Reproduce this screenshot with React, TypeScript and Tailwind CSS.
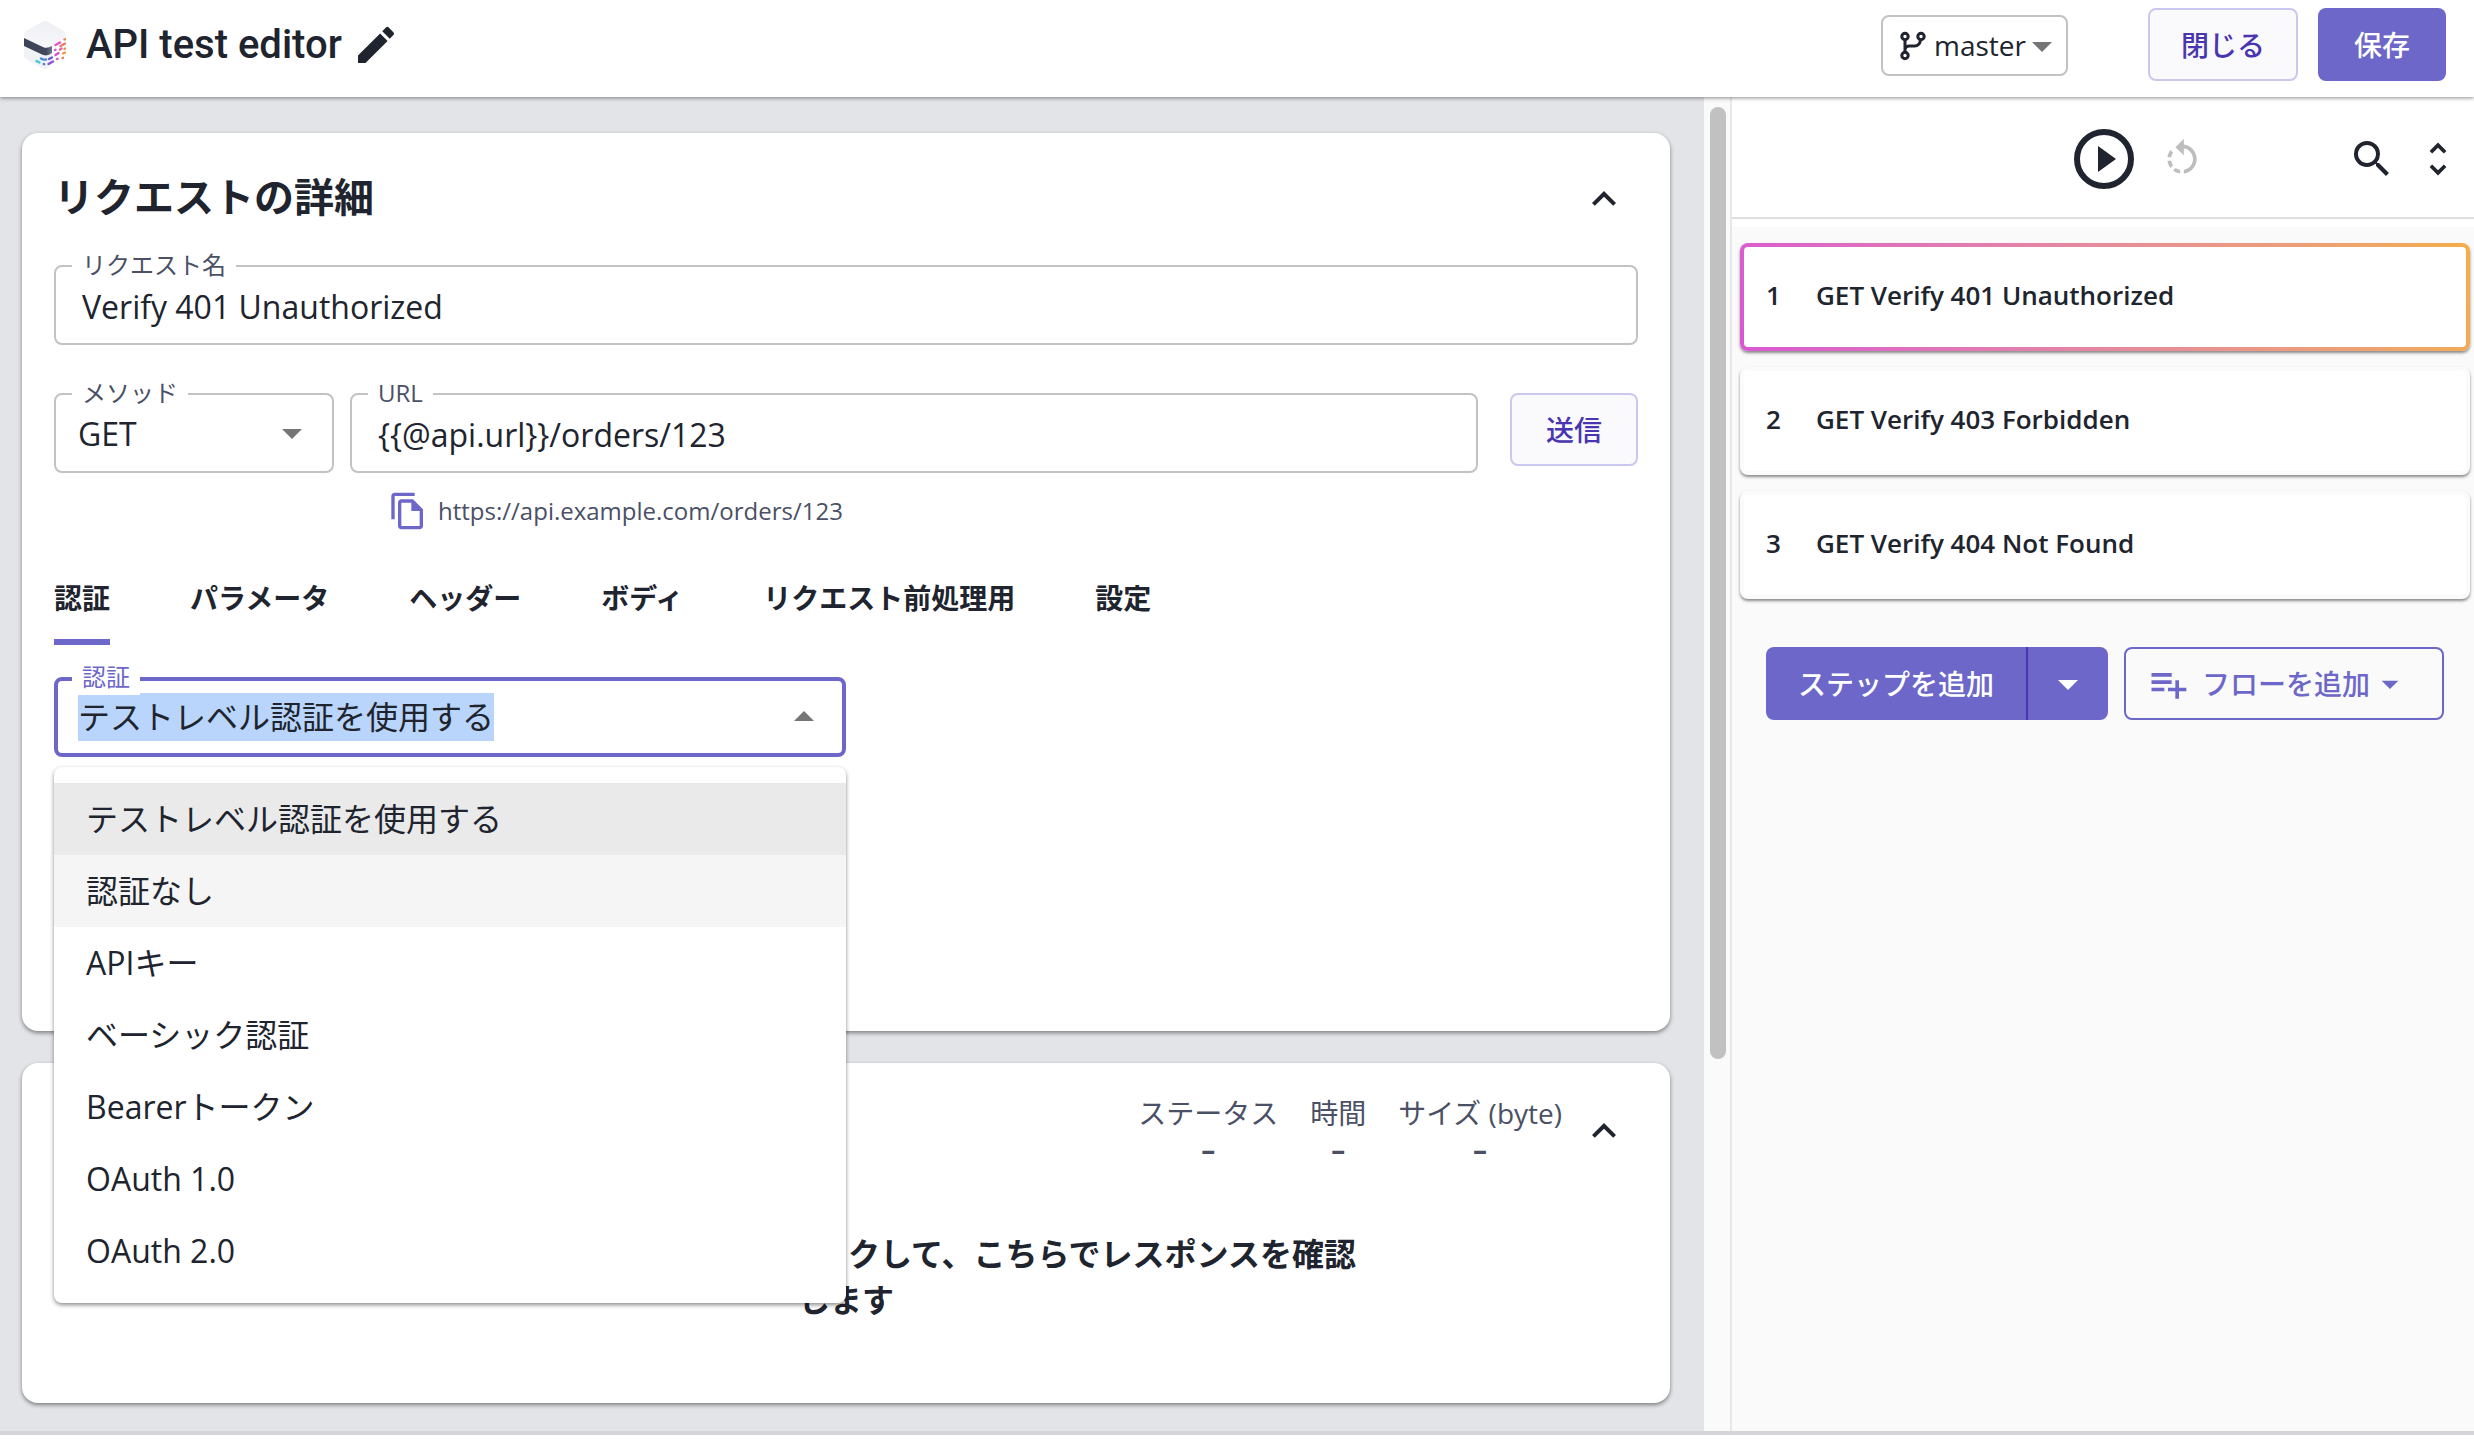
import type { ReactNode } from "react";
import {
  MdArrowDropDown,
  MdArrowDropUp,
  MdEdit,
  MdExpandLess,
  MdOutlineFileCopy,
  MdPlaylistAdd,
  MdRotateLeft,
  MdSearch,
  MdUnfoldMore,
} from "react-icons/md";

const tabs = ["認証", "パラメータ", "ヘッダー", "ボディ", "リクエスト前処理用", "設定"];

const authOptions = [
  "テストレベル認証を使用する",
  "認証なし",
  "APIキー",
  "ベーシック認証",
  "Bearerトークン",
  "OAuth 1.0",
  "OAuth 2.0",
];

const stats = ["ステータス", "時間", "サイズ (byte)"];

const steps = [
  "GET Verify 401 Unauthorized",
  "GET Verify 403 Forbidden",
  "GET Verify 404 Not Found",
];

function Logo() {
  return (
    <svg viewBox="0 0 42 48" className="h-12 w-[42px]" aria-hidden="true">
      <defs>
        <linearGradient id="logo-top" x1="0" y1="0" x2="0" y2="1">
          <stop offset="0" stopColor="#eeeff4" />
          <stop offset="1" stopColor="#f8f8fb" />
        </linearGradient>
        <linearGradient id="logo-band" x1="0" y1="0" x2="1" y2="0">
          <stop offset="0" stopColor="#3c4356" />
          <stop offset="0.8" stopColor="#42495d" />
          <stop offset="1" stopColor="#70788e" />
        </linearGradient>
      </defs>
      <path d="M0 24 L20 35 L28 33 L28 42 L24 47 Q21 49 18 47 L2 38 Q0 37 0 35 Z" fill="#f1f2f6" />
      <path
        d="M18 1 Q21 -1 24 1 L40 10 Q42 11.5 42 14 L42 17 L28 25.5 Q24 28 20 26 L0 17 L0 13 Q0 11 2 10 Z"
        fill="url(#logo-top)"
      />
      <path d="M0 17 L20 26.5 Q24 27.5 28 25 L28 32 Q24 35.5 19 34 L0 25 Z" fill="url(#logo-band)" />
      <g strokeWidth="2.4" strokeLinecap="round" fill="none">
        <path d="M40.5 18.5 L41 18.2" stroke="#f0884a" />
        <path d="M31.5 24 L36 21.5" stroke="#dc58c4" />
        <path d="M36.5 25 L41 22.5" stroke="#ee7a6a" />
        <path d="M31 29 L31.5 28.8" stroke="#d45ad0" />
        <path d="M36 28.5 L37.5 27.5" stroke="#e065a8" />
        <path d="M40.5 28 L41 27.5" stroke="#f08a50" />
        <path d="M31.5 34 L34.5 32" stroke="#cc55cc" />
        <path d="M39 32.5 L41 31.5" stroke="#f29a48" />
        <path d="M33 38 L33.5 37.8" stroke="#d65cc0" />
        <path d="M38.5 37 L39 36.8" stroke="#ee8060" />
        <path d="M24.5 43 L29 40.5" stroke="#8a55d8" />
        <path d="M25 38 L28 36.5" stroke="#6a5ad6" />
        <path d="M17 37.5 Q19 39 22 38.5" stroke="#4a8ad6" />
        <path d="M12.5 40 L15.5 41.5" stroke="#3fc8d4" />
        <path d="M19.8 43 L20.2 43.2" stroke="#4a7ad6" />
      </g>
    </svg>
  );
}

function BranchIcon() {
  return (
    <svg viewBox="0 0 26 30" className="h-[30px] w-[26px]" fill="none" stroke="currentColor" strokeWidth="3" aria-hidden="true">
      <circle cx="5" cy="5.5" r="3.2" />
      <circle cx="21" cy="5.5" r="3.2" />
      <circle cx="5" cy="24.5" r="3.2" />
      <path d="M5 8.5 V21.5 M5 18 Q6 15 9 15 H14.5 Q20 15 20.5 8.5" />
    </svg>
  );
}

function PlayIcon() {
  return (
    <svg viewBox="0 0 60 60" className="size-[60px]" aria-hidden="true">
      <circle cx="30" cy="30" r="27" fill="none" stroke="currentColor" strokeWidth="6" />
      <path d="M24 17 L42 30 L24 43 Z" fill="currentColor" />
    </svg>
  );
}

function Field({
  id,
  label,
  className,
  active,
  children,
}: {
  id: string;
  label: string;
  className?: string;
  active?: boolean;
  children: ReactNode;
}) {
  return (
    <div
      className={`relative flex h-20 items-center rounded-lg ${
        active ? "border-4 border-[#6c67c9]" : "border-2 border-[#c2c2c2]"
      } ${className ?? ""}`}
    >
      <label
        htmlFor={id}
        className={`absolute bg-white px-[10px] text-2xl leading-9 ${
          active ? "-top-[22px] left-[14px] text-[#6c67c9]" : "-top-5 left-4 text-[#4a5066]"
        }`}
      >
        {label}
      </label>
      {children}
    </div>
  );
}

export default function App() {
  return (
    <div className="flex min-h-screen flex-col bg-white font-['Open_Sans','Noto_Sans_CJK_JP',sans-serif] text-[#20242e]">
      <header className="z-10 flex h-[97px] items-start justify-between bg-white pr-7 pl-6 shadow-[0_1px_4px_rgba(0,0,0,0.45)]">
        <div className="flex h-[90px] items-center">
          <Logo />
          <h1 className="ml-5 font-['Roboto',sans-serif] text-[40px] leading-none font-medium">API test editor</h1>
          <button type="button" aria-label="名前を編集" className="ml-[10px]">
            <MdEdit className="size-12" />
          </button>
        </div>
        <div className="flex pt-2">
          <div className="relative mt-[7px] flex h-[61px] items-center rounded-lg border-2 border-[#c2c2c2] pl-[17px]">
            <BranchIcon />
            <select
              aria-label="ブランチ"
              className="h-full appearance-none bg-transparent pr-10 pb-[2px] pl-2 text-[28px] leading-10 outline-none"
            >
              <option>master</option>
            </select>
            <MdArrowDropDown className="pointer-events-none absolute right-0 size-12 text-[#757575]" aria-hidden="true" />
          </div>
          <button
            type="button"
            className="ml-20 h-[73px] rounded-lg border-2 border-[#cbc8ef] bg-[#fafafc] px-[31px] text-[28px] font-medium text-[#4a35b0]"
          >
            閉じる
          </button>
          <button
            type="button"
            className="ml-5 h-[73px] rounded-lg bg-[#6c67c9] px-9 text-[28px] font-medium text-white"
          >
            保存
          </button>
        </div>
      </header>

      <div className="mb-[14px] flex flex-1 border-b-4 border-[#d4d5d8]">
        <main className="min-w-0 flex-1 bg-[#e3e4e8] pt-9 pr-[34px] pb-7 pl-[22px]">
          <section className="min-h-[898px] rounded-2xl bg-white px-8 pt-9 shadow-[0_2px_4px_rgba(0,0,0,0.45)]">
            <div className="flex h-[60px] items-center justify-between">
              <h2 className="pb-1 text-[40px] leading-none font-bold">リクエストの詳細</h2>
              <button type="button" aria-label="折りたたむ" className="mr-[10px]">
                <MdExpandLess className="size-12" />
              </button>
            </div>

            <Field id="request-name" label="リクエスト名" className="mt-9">
              <input
                id="request-name"
                defaultValue="Verify 401 Unauthorized"
                className="h-full w-full bg-transparent px-[26px] pt-[2px] text-[32px] outline-none"
              />
            </Field>

            <div className="mt-12 flex items-start">
              <Field id="method" label="メソッド" className="w-[280px]">
                <select
                  id="method"
                  className="h-full w-full appearance-none bg-transparent px-[22px] pt-[2px] text-[32px] outline-none"
                >
                  <option>GET</option>
                </select>
                <MdArrowDropDown
                  className="pointer-events-none absolute right-4 size-12 text-[#757575]"
                  aria-hidden="true"
                />
              </Field>
              <Field id="url" label="URL" className="ml-4 flex-1">
                <input
                  id="url"
                  defaultValue="{{@api.url}}/orders/123"
                  className="h-full w-full bg-transparent px-[26px] pt-[2px] text-[32px] outline-none"
                />
              </Field>
              <button
                type="button"
                className="ml-8 h-[73px] rounded-lg border-2 border-[#cbc8ef] bg-[#fafafc] px-[34px] text-[28px] font-medium text-[#4a35b0]"
              >
                送信
              </button>
            </div>

            <div className="mt-4 flex h-11 items-center pl-[334px] text-2xl text-[#4a5066]">
              <button type="button" aria-label="URLをコピー" className="mr-[10px] text-[#6c67c9]">
                <MdOutlineFileCopy className="size-10" />
              </button>
              <p>https://api.example.com/orders/123</p>
            </div>

            <div role="tablist" className="mt-8 flex gap-20">
              {tabs.map((tab, index) => (
                <button
                  key={tab}
                  type="button"
                  role="tab"
                  aria-selected={index === 0}
                  className={`h-20 border-b-6 pb-2 text-[28px] leading-10 font-bold ${
                    index === 0 ? "border-[#6c67c9]" : "border-transparent"
                  }`}
                >
                  {tab}
                </button>
              ))}
            </div>

            <div className="relative mt-8 w-1/2">
              <Field id="auth" label="認証" active className="justify-between pr-[14px] pl-5">
                <input
                  id="auth"
                  role="combobox"
                  aria-expanded="true"
                  aria-controls="auth-options"
                  defaultValue="テストレベル認証を使用する"
                  className="field-sizing-content h-12 bg-[#b9d5fb] text-[32px] outline-none"
                />
                <MdArrowDropUp className="size-12 text-[#757575]" aria-hidden="true" />
              </Field>
              <ul
                id="auth-options"
                role="listbox"
                className="absolute top-[90px] left-0 z-20 w-full rounded-lg bg-white py-4 shadow-[0_2px_4px_rgba(0,0,0,0.45)]"
              >
                {authOptions.map((option, index) => (
                  <li
                    key={option}
                    role="option"
                    aria-selected={index === 0}
                    className={`flex h-[72px] items-center px-8 text-[32px] leading-none ${
                      index === 0 ? "bg-[#eaeaea]" : index === 1 ? "bg-[#f5f5f5]" : ""
                    }`}
                  >
                    {option}
                  </li>
                ))}
              </ul>
            </div>
          </section>

          <section className="mt-8 min-h-[340px] rounded-2xl bg-white px-8 pt-8 shadow-[0_2px_4px_rgba(0,0,0,0.45)]">
            <div className="flex items-start justify-end pr-[10px]">
              <dl className="flex gap-8 text-[28px] leading-9 text-[#4a5066]">
                {stats.map((name) => (
                  <div key={name} className="text-center">
                    <dt>{name}</dt>
                    <dd className="font-bold">–</dd>
                  </div>
                ))}
              </dl>
              <button type="button" aria-label="折りたたむ" className="mt-3 ml-[18px]">
                <MdExpandLess className="size-12" />
              </button>
            </div>
            <p className="mx-auto mt-16 w-[1040px] text-center text-[32px] leading-[46px] font-bold">
              画面上部の「送信」ボタンをクリックして、こちらでレスポンスを確認します
            </p>
          </section>
        </main>

        <div className="w-7 border-r-2 border-[#e8e8e8] bg-[#fafafa] pt-[10px] pr-1 pl-[6px]">
          <div className="h-[952px] rounded-full bg-[#c1c1c1]" />
        </div>

        <aside className="flex w-[742px] flex-col bg-[#fafafa]">
          <div className="bg-white pb-2">
            <div className="flex h-[122px] items-center justify-end border-b-2 border-[#dedede] pt-1 pr-[14px]">
              <button type="button" aria-label="実行">
                <PlayIcon />
              </button>
              <button type="button" aria-label="リセット" disabled className="ml-[26px] text-[#bdbdbd]">
                <MdRotateLeft className="size-11" />
              </button>
              <button type="button" aria-label="検索" className="ml-36">
                <MdSearch className="size-12" />
              </button>
              <button type="button" aria-label="すべて展開" className="ml-5">
                <MdUnfoldMore className="size-11" />
              </button>
            </div>
          </div>
          <ol className="mt-4 flex flex-col gap-4 pr-1 pl-2">
            {steps.map((step, index) => (
              <li
                key={step}
                className={`rounded-lg p-1 shadow-[0_2px_3px_rgba(0,0,0,0.45)] ${
                  index === 0 ? "bg-linear-70 from-[#d957d3] to-[#f4ae49]" : "bg-[#fbfbfb]"
                }`}
              >
                <div className="flex h-[100px] items-center rounded-sm bg-white pb-1 pl-[22px] text-[26px] leading-10 font-semibold">
                  <span className="w-[50px]">{index + 1}</span>
                  <span>{step}</span>
                </div>
              </li>
            ))}
          </ol>
          <div className="mt-12 flex gap-4 pl-[34px] text-[28px] font-medium">
            <div className="flex h-[73px] rounded-lg bg-[#6c67c9] text-white">
              <button type="button" className="px-8">
                ステップを追加
              </button>
              <button type="button" aria-label="ステップの種類" className="border-l-2 border-[#4a35b0] px-4">
                <MdArrowDropDown className="size-12" />
              </button>
            </div>
            <button
              type="button"
              className="flex h-[73px] items-center rounded-lg border-2 border-[#6c67c9] pr-8 pl-5 text-[#6c67c9]"
            >
              <MdPlaylistAdd className="mr-3 size-11" />
              フローを追加
              <MdArrowDropDown className="size-10" />
            </button>
          </div>
        </aside>
      </div>
    </div>
  );
}
